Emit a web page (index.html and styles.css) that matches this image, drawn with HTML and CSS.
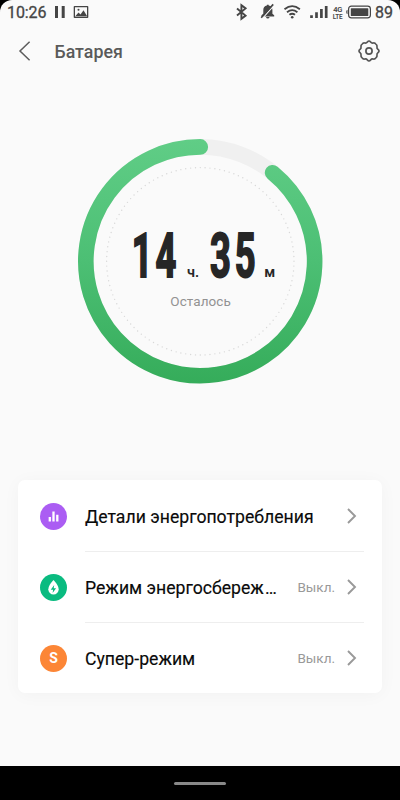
FILE: index.html
```html
<!DOCTYPE html>
<html lang="ru">
<head>
<meta charset="utf-8">
<meta name="viewport" content="width=device-width, initial-scale=1">
<title>Батарея</title>
<link rel="stylesheet" href="styles.css">
</head>
<body>
<div class="phone">
  <main class="screen">
    <div class="status">
      <span class="clock">10:26</span>
      <svg class="status-left" width="38" height="24" viewBox="52 0 38 24" fill="#454545">
        <path d="M55 6h3v12h-3zM61.700 6h3v12h-3z"/>
        <path fill-rule="evenodd" d="M74.500 6h13q.8 0 .8.8v10.400q0 .8-.8.8h-13q-.8 0-.8-.8V6.800q0-.8.8-.8zM75 7.300v9.200h12V7.300z"/>
        <path d="M75.500 16l3-3.500 2 2 3-4.200 3.500 5.700z"/><circle cx="78.500" cy="9.800" r="1"/>
      </svg>
      <svg class="status-right" width="141" height="24" viewBox="232 0 141 24" fill="none" stroke="#454545">
        <path d="M237 8.400l8.600 7.200-4.200 3.200V5.200l4.200 3.200-8.600 7.200" stroke-width="1.900"/>
        <path d="M261.500 16.400v-1.100l1.800-1.600V10q0-3.800 3.600-4.500V4.800h1.800v.7q3.700.7 3.700 4.500v3.700l1.800 1.600v1.100zM266 17h3.600q-.3 1.500-1.800 1.500t-1.800-1.500z" fill="#454545" stroke="none"/>
        <path d="M262.200 18.600l12-13.500" stroke="#fafafa" stroke-width="1.300"/>
        <path d="M261.200 17.700l12-13.300" stroke-width="1.600"/>
        <path d="M284.500 9.300q7.700-6.300 15.400 0M287 12.200q5.200-4.200 10.400 0M289.400 14.800q2.800-2.200 5.600 0" stroke-width="1.800"/>
        <circle cx="292.200" cy="17.200" r="1.300" fill="#454545" stroke="none"/>
        <path d="M311.500 15.200V18M316.500 12.200V18M321.400 9V18M326.200 6V18" stroke-width="2.700"/>
        <rect x="348.600" y="6.200" width="21.800" height="11.600" rx="2.800" stroke-width="1.200"/>
        <rect x="350.800" y="8.200" width="17.500" height="7.800" rx=".6" fill="#454545" stroke="none"/>
        <path d="M347.500 9.700q-1.300.5-1.300 2.300t1.300 2.300z" fill="#454545" stroke="none"/>
        <text class="net" x="333.300" y="11.900" textLength="9">4G</text>
        <text class="net net-lte" x="332.800" y="18.600" textLength="9.800">LTE</text>
      </svg>
      <span class="percent">89</span>
    </div>

    <header class="header">
      <svg width="14" height="22" viewBox="0 0 14 22"><path d="M11.600 1.800L2 11l9.600 9.200" fill="none" stroke="#5c5c5c" stroke-width="1.500"/></svg>
      <h1>Батарея</h1>
      <svg class="gear" width="24" height="24" viewBox="-12 -12 24 24" fill="none" stroke="#555" stroke-width="1.700" stroke-linejoin="round">
        <path d="M0-10Q.8-10 1.600-9Q2.600-7.700 4.200-8Q6-8.300 6.900-6.900Q8.300-6 8-4.200Q7.700-2.600 9-1.600Q10-.8 10 0Q10 .8 9 1.600Q7.700 2.600 8 4.200Q8.300 6 6.900 6.900Q6 8.300 4.200 8Q2.600 7.700 1.600 9Q.8 10 0 10Q-.8 10-1.600 9Q-2.600 7.700-4.200 8Q-6 8.300-6.900 6.900Q-8.300 6-8 4.200Q-7.700 2.600-9 1.600Q-10 .8-10 0Q-10-.8-9-1.600Q-7.700-2.600-8-4.200Q-8.300-6-6.900-6.900Q-6-8.300-4.200-8Q-2.600-7.700-1.600-9Q-.8-10 0-10z"/>
        <circle r="3.100"/>
      </svg>
    </header>

    <section class="gauge">
      <svg width="260" height="260" viewBox="70 131 260 260">
        <defs>
          <linearGradient id="ring" gradientUnits="userSpaceOnUse" x1="200" y1="139" x2="200" y2="384">
            <stop offset="0" stop-color="#60cd86"/><stop offset=".5" stop-color="#4cbf74"/><stop offset="1" stop-color="#35ac5a"/>
          </linearGradient>
        </defs>
        <circle cx="200.300" cy="261.300" r="114.400" fill="none" stroke="#f0f0f0" stroke-width="15.600"/>
        <path d="M272.600 172.700A114.400 114.400 0 1 1 200.300 146.900" fill="none" stroke="url(#ring)" stroke-width="15.600" stroke-linecap="round"/>
        <circle cx="200.300" cy="261.300" r="93.700" fill="none" stroke="#d8d8d8" stroke-width="1.400" stroke-linecap="round" pathLength="600" stroke-dasharray="0 5"/>
        <text class="digits" transform="translate(131.800 276.500) scale(.6 1)" x="0 39.500">14</text>
        <text class="unit" x="187" y="277">ч.</text>
        <text class="digits" transform="translate(210.100 276.500) scale(.6 1)" x="0 41">35</text>
        <text class="unit" x="264.300" y="277">м</text>
        <text class="caption" x="170.300" y="306" textLength="60.500">Осталось</text>
      </svg>
    </section>

    <section class="card">
      <div class="row">
        <svg class="badge" width="27" height="27" viewBox="0 0 27 27"><circle cx="13.500" cy="13.500" r="13.500" fill="#ab5df3"/><path d="M9.800 14v4.500M13.500 8.500v10M17.300 11.800v6.700" stroke="#fff" stroke-width="2.300"/></svg>
        <div class="line">
          <span class="label">Детали энергопотребления</span>
          <svg class="chevron" width="10" height="16" viewBox="0 0 10 16"><path d="M1 1l7 7-7 7"/></svg>
        </div>
      </div>
      <div class="row">
        <svg class="badge" width="27" height="27" viewBox="0 0 27 27"><circle cx="13.500" cy="13.500" r="13.500" fill="#0abb80"/><path d="M13.500 6Q8.300 11.600 8.300 15.200a5.200 5.200 0 0 0 10.400 0Q18.700 11.600 13.500 6z" fill="#fff"/><path d="M14.200 11l-3.500 4.800h2.400l-.5 3.300 3.500-4.800h-2.400z" fill="#0abb80"/></svg>
        <div class="line">
          <span class="label">Режим энергосбереж<span class="dots">…</span></span>
          <span class="value">Выкл.</span>
          <svg class="chevron" width="10" height="16" viewBox="0 0 10 16"><path d="M1 1l7 7-7 7"/></svg>
        </div>
      </div>
      <div class="row">
        <svg class="badge" width="27" height="27" viewBox="0 0 27 27"><circle cx="13.500" cy="13.500" r="13.500" fill="#fc8636"/><text class="super" x="13.500" y="18.200" text-anchor="middle">S</text></svg>
        <div class="line">
          <span class="label">Супер-режим</span>
          <span class="value">Выкл.</span>
          <svg class="chevron" width="10" height="16" viewBox="0 0 10 16"><path d="M1 1l7 7-7 7"/></svg>
        </div>
      </div>
    </section>
  </main>
  <nav class="navbar"><span class="handle"></span></nav>
</div>
</body>
</html>
```
FILE: styles.css
```css
* { box-sizing: border-box; }

body {
  margin: 0;
  background: #000;
  font-family: Roboto, "Liberation Sans", sans-serif;
}

svg { display: block; flex: none; }

.phone {
  display: flex;
  flex-direction: column;
  width: 400px;
  height: 800px;
  overflow: hidden;
}

.screen {
  flex: none;
  height: 766px;
  background: #fafafa;
  border-radius: 12px 12px 0 0;
}

.status {
  display: flex;
  align-items: center;
  height: 24px;
  padding: 0 7px;
  color: #454545;
  font-size: 16px;
}

.clock { width: 45px; letter-spacing: -0.1px; -webkit-text-stroke: 0.3px #454545; }
.status-right { margin-left: 142px; }
.percent { margin-left: 2px; -webkit-text-stroke: 0.3px #454545; }

.net { font-size: 7.500px; font-weight: 600; fill: #454545; stroke: none; }
.net-lte { font-size: 6.400px; }

.header {
  display: flex;
  align-items: center;
  height: 54px;
  padding: 0 19px 0 18px;
}

.header h1 {
  margin: 0 0 0 22.500px;
  color: #5a5a5a;
  font-size: 17.800px;
  font-weight: 500;
}

.gear { margin-left: auto; }

.gauge {
  display: flex;
  justify-content: center;
  height: 402px;
  padding-top: 53px;
}

.digits {
  font-size: 60.500px;
  font-weight: 700;
  fill: #262626;
  stroke: #262626;
  stroke-width: 2px;
}

.unit { font-size: 14.500px; font-weight: 600; fill: #262626; }
.caption { font-size: 13.500px; fill: #929292; }

.card {
  margin: 0 18px;
  height: 213px;
  padding-top: 1px;
  background: #fff;
  border-radius: 7px;
  box-shadow: 0 2px 18px rgba(0, 0, 0, 0.035);
}

.row {
  display: flex;
  align-items: center;
  height: 71px;
  padding: 0 18px 0 22px;
}

.line {
  display: flex;
  flex: 1;
  align-items: center;
  height: 71px;
  margin-left: 18px;
  padding-right: 7px;
  border-bottom: 1px solid #eee;
}

.row:last-child .line { border-bottom-color: transparent; }

.label { flex: 1; padding-top: 1px; font-size: 17.650px; color: #0a0a0a; white-space: nowrap; -webkit-text-stroke: 0.15px #0a0a0a; }
.dots { letter-spacing: 0; margin-left: 1px; }
.value { margin-right: 12px; font-size: 13.500px; color: #999; }
.chevron { margin-bottom: 1px; fill: none; stroke: #999; stroke-width: 1.900; }
.super { font-size: 14px; font-weight: 700; fill: #fff; }

.navbar {
  display: flex;
  flex: 1;
  align-items: center;
  justify-content: center;
  background: #000;
}

.handle { width: 52px; height: 3px; border-radius: 2px; background: #888; }
```
